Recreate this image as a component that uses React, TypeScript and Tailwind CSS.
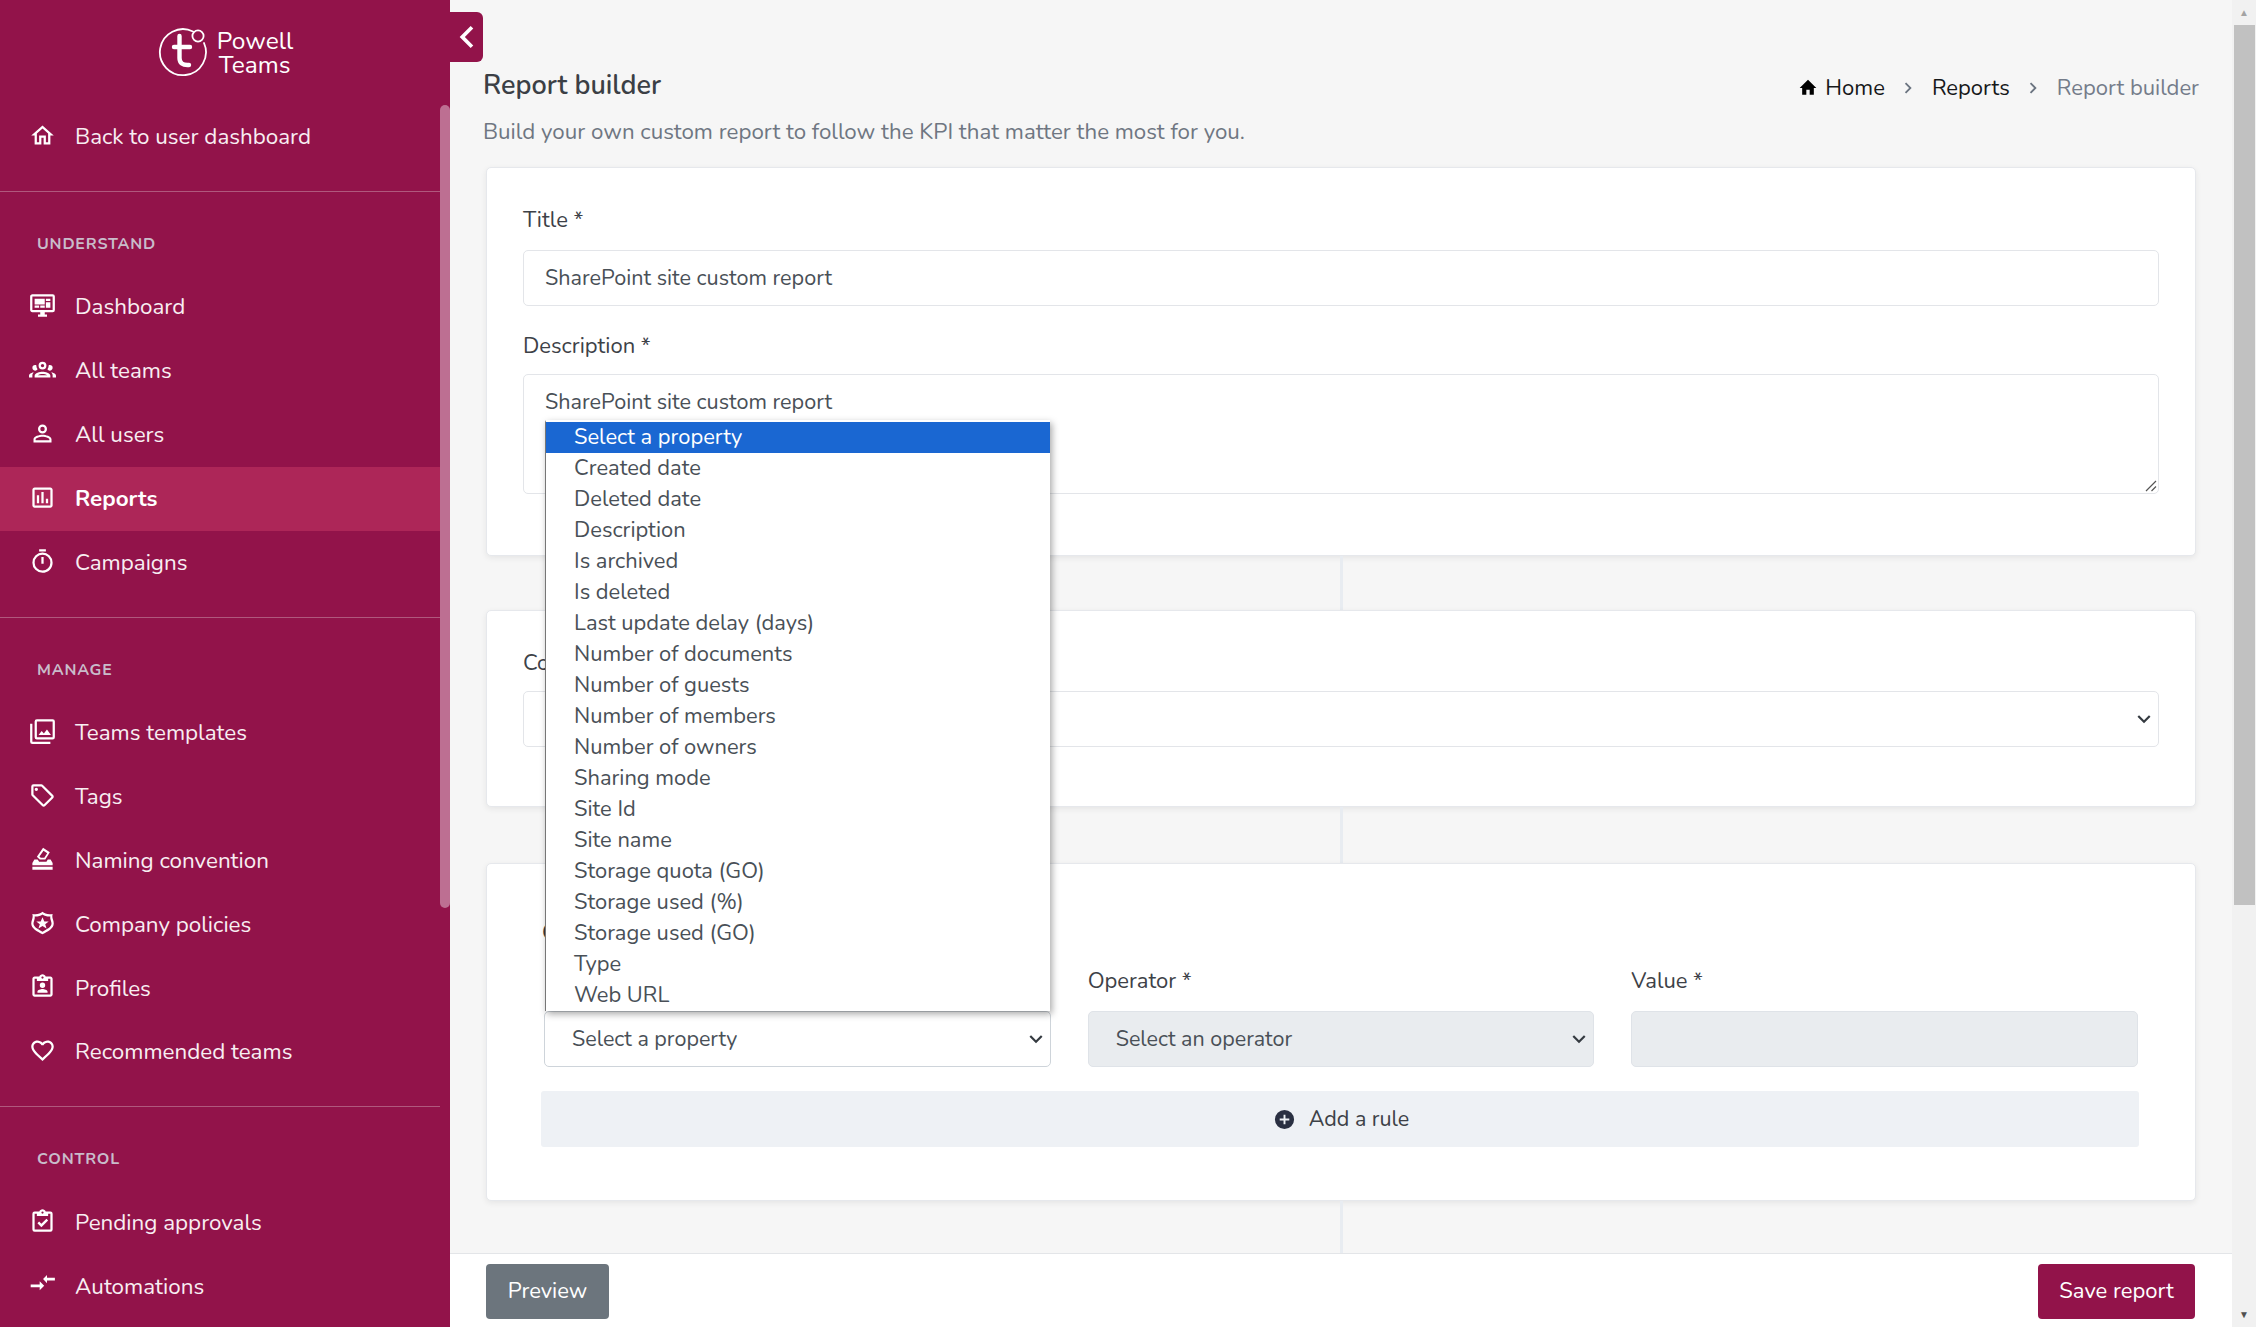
import type { ReactNode } from "react";

function Mdi({ d, className = "h-[27px] w-[27px]" }: { d: string; className?: string }) {
  return (
    <svg viewBox="0 0 24 24" fill="currentColor" aria-hidden="true" className={`shrink-0 ${className}`}>
      <path d={d} />
    </svg>
  );
}

const icons = {
  home: "M12 5.69L17 10.19V18H15V12H9V18H7V10.19L12 5.69M12 3L2 12H5V20H11V14H13V20H19V12H22L12 3Z",
  dashboard:
    "M21,16V4H3V16H21M21,2A2,2 0 0,1 23,4V16A2,2 0 0,1 21,18H14V20H16V22H8V20H10V18H3C1.89,18 1,17.1 1,16V4C1,2.89 1.89,2 3,2H21M5,6H14V11H5V6M15,6H19V8H15V6M19,9V14H15V9H19M5,12H9V14H5V12M10,12H14V14H10V12Z",
  teams:
    "M12,5A3.5,3.5 0 0,0 8.5,8.5A3.5,3.5 0 0,0 12,12A3.5,3.5 0 0,0 15.5,8.5A3.5,3.5 0 0,0 12,5M12,7A1.5,1.5 0 0,1 13.5,8.5A1.5,1.5 0 0,1 12,10A1.5,1.5 0 0,1 10.5,8.5A1.5,1.5 0 0,1 12,7M5.5,8A2.5,2.5 0 0,0 3,10.5C3,11.44 3.53,12.25 4.29,12.68C4.65,12.88 5.06,13 5.5,13C5.94,13 6.35,12.88 6.71,12.68C7.08,12.47 7.39,12.17 7.62,11.81C6.89,10.86 6.5,9.7 6.5,8.5C6.5,8.41 6.5,8.31 6.5,8.22C6.2,8.08 5.86,8 5.5,8M18.5,8C18.14,8 17.8,8.08 17.5,8.22C17.5,8.31 17.5,8.41 17.5,8.5C17.5,9.7 17.11,10.86 16.38,11.81C16.5,12 16.63,12.15 16.78,12.3C16.94,12.45 17.1,12.58 17.29,12.68C17.65,12.88 18.06,13 18.5,13C18.94,13 19.35,12.88 19.71,12.68C20.47,12.25 21,11.44 21,10.5A2.5,2.5 0 0,0 18.5,8M12,14C9.66,14 5,15.17 5,17.5V19H19V17.5C19,15.17 14.34,14 12,14M4.71,14.55C2.78,14.78 0,15.76 0,17.5V19H3V17.07C3,16.06 3.69,15.22 4.71,14.55M19.29,14.55C20.31,15.22 21,16.06 21,17.07V19H24V17.5C24,15.76 21.22,14.78 19.29,14.55M12,16C13.53,16 15.24,16.5 16.23,17H7.77C8.76,16.5 10.47,16 12,16Z",
  users:
    "M12,4A4,4 0 0,1 16,8A4,4 0 0,1 12,12A4,4 0 0,1 8,8A4,4 0 0,1 12,4M12,6A2,2 0 0,0 10,8A2,2 0 0,0 12,10A2,2 0 0,0 14,8A2,2 0 0,0 12,6M12,13C14.67,13 20,14.33 20,17V20H4V17C4,14.33 9.33,13 12,13M12,14.9C9.03,14.9 5.9,16.36 5.9,17V18.1H18.1V17C18.1,16.36 14.97,14.9 12,14.9Z",
  reports:
    "M9 17H7V10H9V17M13 17H11V7H13V17M17 17H15V13H17V17M19 19H5V5H19V19.1M19 3H5C3.9 3 3 3.9 3 5V19C3 20.1 3.9 21 5 21H19C20.1 21 21 20.1 21 19V5C21 3.9 20.1 3 19 3Z",
  campaigns:
    "M12,20A7,7 0 0,1 5,13A7,7 0 0,1 12,6A7,7 0 0,1 19,13A7,7 0 0,1 12,20M12,4A9,9 0 0,0 3,13A9,9 0 0,0 12,22C17,22 21,17.97 21,13A9,9 0 0,0 12,4M11,14H13V8H11M15,1H9V3H15V1Z",
  templates:
    "M21,17H7V3H21M21,1H7A2,2 0 0,0 5,3V17A2,2 0 0,0 7,19H21A2,2 0 0,0 23,17V3A2,2 0 0,0 21,1M3,5H1V21A2,2 0 0,0 3,23H19V21H3M15.96,10.29L13.21,13.83L11.25,11.47L8.5,15H19.5L15.96,10.29Z",
  tags: "M21.41 11.58L12.41 2.58A2 2 0 0 0 11 2H4A2 2 0 0 0 2 4V11A2 2 0 0 0 2.59 12.42L11.59 21.42A2 2 0 0 0 13 22A2 2 0 0 0 14.41 21.41L21.41 14.41A2 2 0 0 0 22 13A2 2 0 0 0 21.41 11.58M13 20L4 11V4H11L20 13M6.5 5A1.5 1.5 0 1 1 5 6.5A1.5 1.5 0 0 1 6.5 5Z",
  naming:
    "M12.5 1.5L18.5 5.5L14.5 12H9.5L7 9.5L12.5 1.5ZM12.9 4.2L9.3 9.3L10.4 10.4H13.6L16.2 6.4ZM4.8 12H7.7L9 14H15.5L16.7 12H19.2L21 15V17H3V15ZM3 18.5H21V21H3Z",
  policies:
    "M12 1.5C14 3.5 17 4 21 3.5C20.5 5.5 20.8 7 21.3 8.5C21.7 9.8 22 11 22 12C22 16.5 17 19 12 21.5C7 19 2 16.5 2 12C2 11 2.3 9.8 2.7 8.5C3.2 7 3.5 5.5 3 3.5C7 4 10 3.5 12 1.5ZM12 4C10 5.5 7.5 6 5 5.8C5.3 7 5 8.2 4.6 9.3C4.2 10.4 4 11.2 4 12C4 15 7.8 17 12 19.3C16.2 17 20 15 20 12C20 11.2 19.8 10.4 19.4 9.3C19 8.2 18.7 7 19 5.8C16.5 6 14 5.5 12 4ZM12 6.5L13.6 10.2H17.5L14.4 12.6L15.6 16.5L12 14.2L8.4 16.5L9.6 12.6L6.5 10.2H10.4Z",
  profiles:
    "M19 3H14.82C14.4 1.84 13.3 1 12 1S9.6 1.84 9.18 3H5C3.9 3 3 3.9 3 5V19C3 20.1 3.9 21 5 21H19C20.1 21 21 20.1 21 19V5C21 3.9 20.1 3 19 3M12 3C12.55 3 13 3.45 13 4S12.55 5 12 5 11 4.55 11 4 11.45 3 12 3M7 7H17V5H19V19H5V5H7V7M12 8.5A2.4 2.4 0 1 1 12 13.3A2.4 2.4 0 0 1 12 8.5M7.5 17.5V16.6C7.5 15 10.5 14.2 12 14.2C13.5 14.2 16.5 15 16.5 16.6V17.5H7.5Z",
  recommended:
    "M12.1,18.55L12,18.65L11.89,18.55C7.14,14.24 4,11.39 4,8.5C4,6.5 5.5,5 7.5,5C9.04,5 10.54,6 11.07,7.36H12.93C13.46,6 14.96,5 16.5,5C18.5,5 20,6.5 20,8.5C20,11.39 16.86,14.24 12.1,18.55M16.5,3C14.76,3 13.09,3.81 12,5.08C10.91,3.81 9.24,3 7.5,3C4.42,3 2,5.41 2,8.5C2,12.27 5.4,15.36 10.55,20.03L12,21.35L13.45,20.03C18.6,15.36 22,12.27 22,8.5C22,5.41 19.58,3 16.5,3Z",
  pending:
    "M19,3H14.82C14.4,1.84 13.3,1 12,1C10.7,1 9.6,1.84 9.18,3H5A2,2 0 0,0 3,5V19A2,2 0 0,0 5,21H19A2,2 0 0,0 21,19V5A2,2 0 0,0 19,3M12,3A1,1 0 0,1 13,4A1,1 0 0,1 12,5A1,1 0 0,1 11,4A1,1 0 0,1 12,3M7,7H17V5H19V19H5V5H7V7M7.5,13.5L9,12L11,14L15.5,9.5L17,11L11,17L7.5,13.5Z",
  automations: "M12.5 7.2L16 3.5V6H23V8.4H16V10.9ZM1.5 12H9.5V9L13.5 13L9.5 17V14.4H1.5Z",
  solidHome: "M10,20V14H14V20H19V12H22L12,2L2,12H5V20H10Z",
  chevronRight: "M8.59,16.58L13.17,12L8.59,7.41L10,6L16,12L10,18L8.59,16.58Z",
  chevronLeft: "M15.41,16.58L10.83,12L15.41,7.41L14,6L8,12L14,18L15.41,16.58Z",
  chevronDown: "M7.41,8.58L12,13.17L16.59,8.58L18,10L12,16L6,10L7.41,8.58Z",
  plusCircle:
    "M17,13H13V17H11V13H7V11H11V7H13V11H17M12,2A10,10 0 0,0 2,12A10,10 0 0,0 12,22A10,10 0 0,0 22,12A10,10 0 0,0 12,2Z",
};

const navSections = [
  {
    label: "Understand",
    items: [
      { name: "Dashboard", icon: icons.dashboard },
      { name: "All teams", icon: icons.teams },
      { name: "All users", icon: icons.users },
      { name: "Reports", icon: icons.reports, active: true },
      { name: "Campaigns", icon: icons.campaigns },
    ],
  },
  {
    label: "Manage",
    items: [
      { name: "Teams templates", icon: icons.templates },
      { name: "Tags", icon: icons.tags },
      { name: "Naming convention", icon: icons.naming },
      { name: "Company policies", icon: icons.policies },
      { name: "Profiles", icon: icons.profiles },
      { name: "Recommended teams", icon: icons.recommended },
    ],
  },
  {
    label: "Control",
    items: [
      { name: "Pending approvals", icon: icons.pending },
      { name: "Automations", icon: icons.automations },
    ],
  },
];

const properties = [
  "Select a property",
  "Created date",
  "Deleted date",
  "Description",
  "Is archived",
  "Is deleted",
  "Last update delay (days)",
  "Number of documents",
  "Number of guests",
  "Number of members",
  "Number of owners",
  "Sharing mode",
  "Site Id",
  "Site name",
  "Storage quota (GO)",
  "Storage used (%)",
  "Storage used (GO)",
  "Type",
  "Web URL",
];

function NavRow({ name, icon, active }: { name: string; icon: string; active?: boolean }) {
  return (
    <div
      className={`flex h-[63.85px] items-center pl-[29px] text-[22.4px] ${
        active ? "bg-[#ad2658] font-bold text-white" : "text-[#f8eef2]"
      }`}
    >
      <Mdi d={icon} className="-mt-[3px] h-[27px] w-[27px] text-white" />
      <span className="ml-[19px]">{name}</span>
    </div>
  );
}

function Logo() {
  return (
    <div className="flex h-[105px] items-start justify-center pt-[24px] pr-[2px]">
      <svg viewBox="0 0 54 54" aria-hidden="true" className="h-[54px] w-[54px] shrink-0 text-white">
        <path
          d="M38 7.5A23 23 0 1 0 49 19"
          fill="none"
          stroke="currentColor"
          strokeWidth="1.8"
          strokeLinecap="round"
        />
        <circle cx="43" cy="12" r="5.6" fill="none" stroke="currentColor" strokeWidth="1.8" />
        <path
          d="M24.5 12V34C24.5 39 27.5 41.5 34 41M19 23H35"
          fill="none"
          stroke="currentColor"
          strokeWidth="4.4"
          strokeLinecap="round"
        />
      </svg>
      <div className="mt-[5px] ml-[8px] text-[24.5px] leading-[24px] text-white">
        <div>Powell</div>
        <div className="ml-[2px]">Teams</div>
      </div>
    </div>
  );
}

function Sidebar() {
  return (
    <aside className="flex h-full w-[450px] shrink-0 flex-col overflow-hidden bg-[#92134a]">
      <Logo />
      <div className="flex min-h-0 flex-1">
        <nav className="w-[440px] shrink-0">
          <NavRow name="Back to user dashboard" icon={icons.home} />
          {navSections.map((section) => (
            <div key={section.label}>
              <div className="mt-[22px] border-t border-[#b0587d]" />
              <div className="mt-[42px] mb-[21.5px] h-[20px] pl-[37px] text-[16px] leading-[20px] font-bold tracking-[0.8px] text-[#c9bcca] uppercase">
                {section.label}
              </div>
              {section.items.map((item) => (
                <NavRow key={item.name} {...item} />
              ))}
            </div>
          ))}
        </nav>
        <div className="h-[803px] w-[10px] rounded-[6px] bg-[#bd6f92]" />
      </div>
    </aside>
  );
}

function Field({ label, children }: { label: string; children: ReactNode }) {
  return (
    <div>
      <div className="mb-[16px] h-[28px] text-[22px] leading-[28px] text-[#3d4147]">{label}</div>
      {children}
    </div>
  );
}

function SelectBox({ text, disabled }: { text: string; disabled?: boolean }) {
  return (
    <div
      className={`flex h-[56px] items-center justify-between rounded-[5px] border pr-[1px] pl-[27px] text-[21.5px] text-[#495057] ${
        disabled ? "border-[#dfe3e8] bg-[#e9ecef]" : "border-[#ced4da] bg-white"
      }`}
    >
      <span>{text}</span>
      <Mdi d={icons.chevronDown} className="h-[26px] w-[26px] text-[#343a40]" />
    </div>
  );
}

function Card({ children, className = "" }: { children: ReactNode; className?: string }) {
  return (
    <section
      className={`rounded-[5px] border border-[#e6e8ec] bg-white px-[36px] shadow-[0_2px_6px_rgba(0,0,0,0.07)] ${className}`}
    >
      {children}
    </section>
  );
}

function Connector({ height }: { height: string }) {
  return <div className={`mx-auto w-[3px] bg-[#e8ecf1] ${height}`} />;
}

function PropertyPopup() {
  return (
    <div className="absolute top-[420px] left-[545px] z-10 w-[505px] border-t-2 border-l border-t-white border-l-[#767676] bg-white shadow-[2px_3px_7px_rgba(0,0,0,0.35)]">
      {properties.map((option, i) => (
        <div
          key={option}
          className={`h-[31px] pl-[28px] text-[21.9px] leading-[31px] ${
            i === 0 ? "bg-[#1a67d2] text-white" : "text-[#495057]"
          }`}
        >
          {option}
        </div>
      ))}
    </div>
  );
}

function Scrollbar() {
  return (
    <div className="flex h-full w-[24px] shrink-0 flex-col items-center bg-[#f1f1f1]">
      <div className="flex h-[25px] items-center justify-center text-[10px] leading-none text-[#a3a3a3]">▲</div>
      <div className="h-[880px] w-[21px] bg-[#c1c1c1]" />
      <div className="flex-1" />
      <div className="flex h-[25px] items-center justify-center text-[10px] leading-none text-[#505050]">▼</div>
    </div>
  );
}

export default function App() {
  return (
    <div className="relative flex h-screen overflow-hidden bg-[#f6f6f6] font-['Nunito','Lato','Noto_Sans',sans-serif]">
      <Sidebar />

      <div className="absolute top-[12px] left-[450px] flex h-[50px] w-[33px] items-center justify-center rounded-r-[6px] bg-[#92134a] text-white">
        <Mdi d={icons.chevronLeft} className="h-[44px] w-[44px]" />
      </div>

      <main className="flex min-w-0 flex-1 flex-col">
        <div className="min-h-0 flex-1 overflow-hidden px-[36px]">
          <div className="-mr-[3px] -ml-[3px] flex h-[36px] justify-between mt-[69px]">
            <h1 className="text-[27px] leading-[34px] font-semibold text-[#3b3f45]">Report builder</h1>
            <div className="flex items-center pt-[2px] text-[22px] leading-[34px]">
              <Mdi d={icons.solidHome} className="h-[20px] w-[20px] text-black" />
              <span className="ml-[7px] text-[#16181a]">Home</span>
              <Mdi d={icons.chevronRight} className="mx-[12.5px] h-[22px] w-[22px] text-[#6b7480]" />
              <span className="text-[#16181a]">Reports</span>
              <Mdi d={icons.chevronRight} className="mx-[12.5px] h-[22px] w-[22px] text-[#6b7480]" />
              <span className="text-[#747c8a]">Report builder</span>
            </div>
          </div>
          <p className="mt-[11px] -ml-[3px] h-[31px] text-[22.3px] leading-[31px] text-[#6f7682]">
            Build your own custom report to follow the KPI that matter the most for you.
          </p>

          <Card className="mt-[20px] h-[389px] pt-[38px]">
            <Field label="Title *">
              <div className="flex h-[56px] items-center rounded-[5px] border border-[#e3e5e9] pl-[21px] text-[21.6px] text-[#495057]">
                SharePoint site custom report
              </div>
            </Field>
            <div className="h-[26px]" />
            <Field label="Description *">
              <div className="relative -mt-[2px] h-[120px] rounded-[5px] border border-[#e3e5e9] pt-[11px] pl-[21px] text-[21.6px] text-[#495057]">
                SharePoint site custom report
                <svg viewBox="0 0 12 12" aria-hidden="true" className="absolute right-[1px] bottom-[1px] h-[12px] w-[12px]">
                  <path d="M1 11L11 1M6.5 11L11 6.5" stroke="#555" strokeWidth="1.2" fill="none" />
                </svg>
              </div>
            </Field>
          </Card>
          <Connector height="h-[54px]" />

          <Card className="h-[197px] pt-[38px]">
            <Field label="Collection *">
              <div className="-mt-[2px] flex h-[56px] items-center justify-end rounded-[5px] border border-[#e3e5e9] pr-[1px]">
                <Mdi d={icons.chevronDown} className="h-[26px] w-[26px] text-[#343a40]" />
              </div>
            </Field>
          </Card>
          <Connector height="h-[56px]" />

          <Card className="h-[338px] pt-[52px]">
            <div className="h-[32px] pl-[19px] text-[24px] leading-[32px] font-bold text-[#343a40]">Conditions</div>
            <div className="mt-[19px] grid grid-cols-3 gap-x-[37px] px-[21px]">
              <Field label="Property *">
                <SelectBox text="Select a property" />
              </Field>
              <Field label="Operator *">
                <SelectBox text="Select an operator" disabled />
              </Field>
              <Field label="Value *">
                <div className="h-[56px] rounded-[5px] border border-[#dfe3e8] bg-[#e9ecef]" />
              </Field>
            </div>
            <div className="mt-[24px] ml-[18px] flex h-[56px] w-[1598px] items-center justify-center gap-[13px] rounded-[3px] bg-[#eef1f5] pl-[2px] text-[21.5px] text-[#3d4147]">
              <Mdi d={icons.plusCircle} className="h-[23px] w-[23px] text-[#2a3042]" />
              <span>Add a rule</span>
            </div>
          </Card>
          <Connector height="h-[60px]" />
        </div>

        <footer className="flex h-[74px] shrink-0 items-start justify-between border-t border-[#e3e5e8] bg-white pt-[10px] pr-[37px] pl-[36px]">
          <div className="flex h-[55px] w-[123px] items-center justify-center rounded-[4px] bg-[#6c757d] text-[22px] text-white">
            Preview
          </div>
          <div className="flex h-[55px] w-[157px] items-center justify-center rounded-[4px] bg-[#92134a] text-[22px] text-white">
            Save report
          </div>
        </footer>
      </main>

      <Scrollbar />
      <PropertyPopup />
    </div>
  );
}
